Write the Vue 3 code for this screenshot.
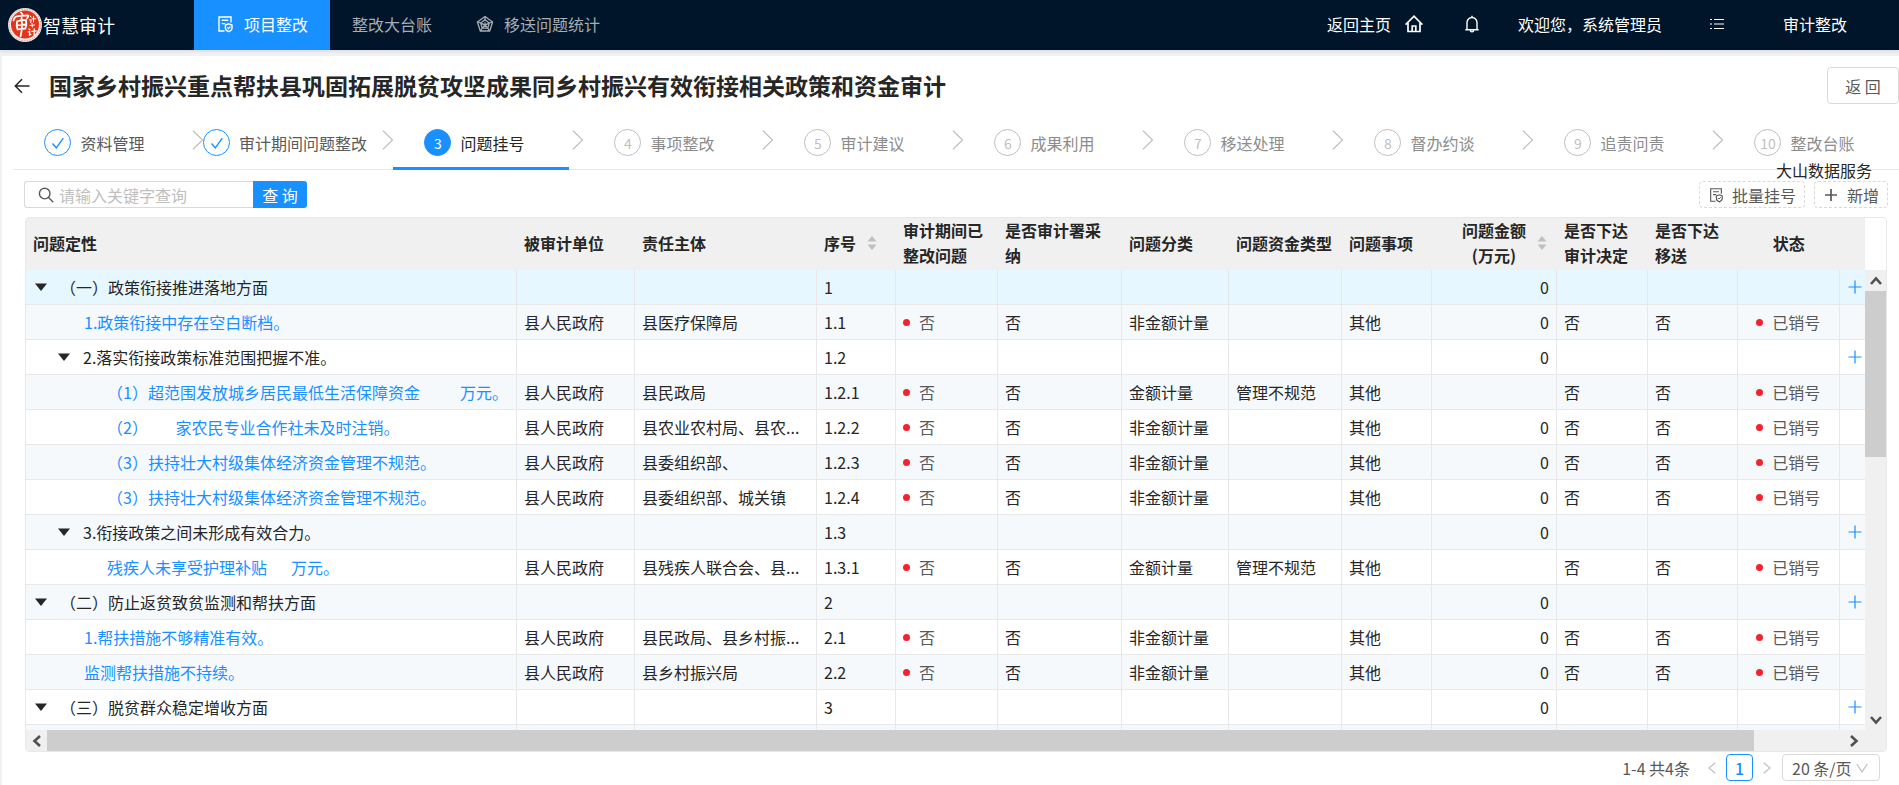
<script setup>
import { ref } from 'vue'

const keyword = ref('')
const pageSize = ref('20')

const steps = [
  { title: '资料管理', state: 'done' },
  { title: '审计期间问题整改', state: 'done' },
  { title: '问题挂号', state: 'active' },
  { title: '事项整改', state: 'wait' },
  { title: '审计建议', state: 'wait' },
  { title: '成果利用', state: 'wait' },
  { title: '移送处理', state: 'wait' },
  { title: '督办约谈', state: 'wait' },
  { title: '追责问责', state: 'wait' },
  { title: '整改台账', state: 'wait' }
]

const columns = [
  { title: '问题定性', width: 491 },
  { title: '被审计单位', width: 118 },
  { title: '责任主体', width: 182 },
  { title: '序号', width: 79, sort: true },
  { title: '审计期间已整改问题', width: 102 },
  { title: '是否审计署采纳', width: 124 },
  { title: '问题分类', width: 107 },
  { title: '问题资金类型', width: 113 },
  { title: '问题事项', width: 90 },
  { title: '问题金额\n(万元)', width: 125, sort: true, align: 'right' },
  { title: '是否下达审计决定', width: 91 },
  { title: '是否下达移送', width: 90 },
  { title: '状态', width: 102, align: 'center' },
  { title: '', width: 25 }
]
const total = columns.reduce((sum, c) => sum + c.width, 0)

const group = (level, name, no) => ({ group: true, level, name, no, amount: '0' })
const leaf = (level, name, duty, no, kind, fund, amount) => ({ level, name, unit: '县人民政府', duty, no, kind, fund, item: '其他', amount })

const rows = [
  group(0, '（一）政策衔接推进落地方面', '1'),
  leaf(1, '1.政策衔接中存在空白断档。', '县医疗保障局', '1.1', '非金额计量', '', '0'),
  group(1, '2.落实衔接政策标准范围把握不准。', '1.2'),
  leaf(2, '（1）超范围发放城乡居民最低生活保障资金\u2003\u2003\u2002万元。', '县民政局', '1.2.1', '金额计量', '管理不规范', ''),
  leaf(2, '（2）\u2003\u2002 家农民专业合作社未及时注销。', '县农业农村局、县农...', '1.2.2', '非金额计量', '', '0'),
  leaf(2, '（3）扶持壮大村级集体经济资金管理不规范。', '县委组织部、', '1.2.3', '非金额计量', '', '0'),
  leaf(2, '（3）扶持壮大村级集体经济资金管理不规范。', '县委组织部、城关镇', '1.2.4', '非金额计量', '', '0'),
  group(1, '3.衔接政策之间未形成有效合力。', '1.3'),
  leaf(2, '残疾人未享受护理补贴\u2003\u2002万元。', '县残疾人联合会、县...', '1.3.1', '金额计量', '管理不规范', ''),
  group(0, '（二）防止返贫致贫监测和帮扶方面', '2'),
  leaf(1, '1.帮扶措施不够精准有效。', '县民政局、县乡村振...', '2.1', '非金额计量', '', '0'),
  leaf(1, '监测帮扶措施不持续。', '县乡村振兴局', '2.2', '非金额计量', '', '0'),
  group(0, '（三）脱贫群众稳定增收方面', '3')
]
</script>

<template>
  <div class="page">
    <header class="topbar">
      <div class="brand">
        <svg class="logo" viewBox="0 0 34 34" aria-hidden="true">
          <circle cx="17" cy="17" r="17" fill="#f3e9e6" />
          <circle cx="17" cy="17" r="15.8" fill="none" stroke="#c9a09a" stroke-width="1" stroke-dasharray="1.5 1.2" />
          <circle cx="17" cy="16.500" r="14" fill="#e2361c" />
          <g fill="none" stroke="#fff" stroke-linecap="round" stroke-linejoin="round">
            <path d="M13 4.500l1.500 2M5.500 12.500c.5-2.500 2-4 4.500-4.300l10-.9c.8 1-.2 2.200-1 3.200" stroke-width="1.700" />
            <path d="M9 13.500c-.6 3-.3 5.500.6 8M9 13.500c3-1.200 6-1.500 9-1.300.6 3 .4 5.800-.6 8.300M9.200 17.300l8.500-.8M9.800 21.300l7.400-.8M13.600 9.800c.6 6 .4 13-1 18.500" stroke-width="1.800" />
            <path d="M22 8l1.300 1M21.500 12l1.800-.4-.6 3M25.500 8.500v5.500M24.300 10.800h3.400M22 17.500l4.500-.5M24 15.500l.3 3.500" stroke-width="1" />
            <path d="M20.800 21l1.200.8M20 24l1.800-.3-.4 3.600 1.500-1M24 23.300l4.300-.5M26.200 20.500v7" stroke-width="1.200" />
          </g>
        </svg>
        <span>智慧审计</span>
      </div>
      <nav class="menu">
        <a href="#" class="menu-item current">
          <svg class="menu-icon" viewBox="0 0 18 18" aria-hidden="true">
            <g fill="none" stroke="currentColor" stroke-width="1.4">
              <path d="M15 7.500V2H3v14h5.500M5.700 5.300h6.600M5.700 8.600h3.500" />
              <path d="M12.700 8.800l3.300 1.200v3c0 1.800-1.500 3-3.300 3.700-1.800-.7-3.300-1.900-3.300-3.700v-3z" />
              <path d="M11.200 12.400l1.200 1.200 2-2.100" stroke-width="1.100" />
            </g>
          </svg>
          项目整改
        </a>
        <a href="#" class="menu-item">整改大台账</a>
        <a href="#" class="menu-item">
          <svg class="menu-icon" viewBox="0 0 18 18" aria-hidden="true">
            <g fill="none" stroke="currentColor" stroke-width="1.300" stroke-linejoin="round">
              <path d="M9 1.500l7.600 5.500-2.900 9H4.300l-2.900-9z" />
              <path d="M9 4.800l4.300 3.200-1.600 5.200H6.300L4.700 8zM9 1.500v3.300M16.600 7l-3.300 1M13.700 16l-2-2.800M4.300 16l2-2.800M1.400 7l3.300 1" />
              <path d="M9 7.200v3l2.500 2.500M9 10.200l-2.500 2.500M9 10.200l4-2M9 10.200l-4-2" />
            </g>
          </svg>
          移送问题统计
        </a>
      </nav>
      <div class="tools">
        <a href="#" class="home-link">
          返回主页
          <svg class="home-icon" viewBox="0 0 18 18" aria-hidden="true">
            <path d="M.5 9.600L9 1.200l8.500 8.400M3 8v8.500h12V8M7.200 16v-5h3.600v5" fill="none" stroke="currentColor" stroke-width="1.700" />
          </svg>
        </a>
        <button type="button" class="plain bell" aria-label="通知">
          <svg viewBox="0 0 16 18" width="16" height="18" aria-hidden="true">
            <path d="M1.300 14.800h13.400M3 14.500V7.500a5 5 0 0 1 10 0v7M8 2.500V.8M6.300 15.200a1.700 1.700 0 0 0 3.400 0" fill="none" stroke="currentColor" stroke-width="1.400" />
          </svg>
        </button>
        <span class="welcome">欢迎您，系统管理员</span>
        <button type="button" class="plain list" aria-label="列表">
          <svg viewBox="0 0 14 12" width="14" height="12" aria-hidden="true">
            <path d="M4 1.500h10M4 6h10M4 10.500h10M0 1.500h2M0 6h2M0 10.500h2" fill="none" stroke="currentColor" stroke-width="1.200" />
          </svg>
        </button>
        <span>审计整改</span>
      </div>
    </header>

    <main class="panel">
      <div class="title-row">
        <button type="button" class="plain back" aria-label="后退">
          <svg viewBox="0 0 16 16" width="16" height="16" aria-hidden="true">
            <path d="M15.500 8H1.500M8 1.200L1.300 8 8 14.800" fill="none" stroke="currentColor" stroke-width="1.500" />
          </svg>
        </button>
        <h1>国家乡村振兴重点帮扶县巩固拓展脱贫攻坚成果同乡村振兴有效衔接相关政策和资金审计</h1>
        <button type="button" class="return-btn">返 回</button>
      </div>

      <ol class="steps">
        <li v-for="(s, i) in steps" :key="s.title" class="step" :class="s.state">
          <span class="step-dot">
            <svg v-if="s.state === 'done'" viewBox="0 0 14 14" width="14" height="14" aria-hidden="true">
              <path d="M1.500 7.500l3.800 4.300 7-9.600" fill="none" stroke="currentColor" stroke-width="1.400" />
            </svg>
            <template v-else>{{ i + 1 }}</template>
          </span>
          <span class="step-title">{{ s.title }}</span>
          <svg v-if="i < steps.length - 1" class="step-arrow" viewBox="0 0 12 20" aria-hidden="true">
            <path d="M1 .8l9.500 9.200L1 19.200" fill="none" stroke="currentColor" stroke-width="1.200" />
          </svg>
        </li>
      </ol>

      <div class="toolbar">
        <form class="search" @submit.prevent>
          <label class="search-box">
            <svg viewBox="0 0 16 16" width="16" height="16" aria-hidden="true">
              <path d="M10.600 10.600l4.600 4.600M12 6.600a5.300 5.300 0 1 1-10.600 0 5.300 5.300 0 0 1 10.600 0z" fill="none" stroke="currentColor" stroke-width="1.400" />
            </svg>
            <input v-model="keyword" type="text" placeholder="请输入关键字查询" aria-label="关键字" />
          </label>
          <button type="submit" class="search-btn">查 询</button>
        </form>
        <div class="actions">
          <button type="button" class="dashed">
            <svg viewBox="0 0 18 18" width="16" height="16" aria-hidden="true">
              <g fill="none" stroke="currentColor" stroke-width="1.300">
                <path d="M15 7.500V2H3v14h5.500M5.700 5.300h6.600M5.700 8.600h3.500" />
                <path d="M12.700 8.800l3.300 1.200v3c0 1.800-1.500 3-3.300 3.700-1.800-.7-3.300-1.900-3.300-3.700v-3z" />
                <path d="M11.200 12.400l1.200 1.200 2-2.100" stroke-width="1.100" />
              </g>
            </svg>
            批量挂号
          </button>
          <button type="button" class="dashed">
            <svg viewBox="0 0 16 16" width="16" height="16" aria-hidden="true">
              <path d="M8 2v12M2 8h12" fill="none" stroke="currentColor" stroke-width="1.700" />
            </svg>
            新增
          </button>
        </div>
        <span class="watermark">大山数据服务</span>
      </div>

      <section class="grid-box">
        <div class="grid-view">
          <table>
            <colgroup>
              <col v-for="(c, i) in columns" :key="i" :style="{ width: (c.width / total) * 100 + '%' }" />
            </colgroup>
            <thead>
              <tr>
                <th v-for="(c, i) in columns" :key="i" scope="col" :class="c.align">
                  <div class="th-inner">
                    <span class="th-text">{{ c.title }}</span>
                    <button v-if="c.sort" type="button" class="plain sorter" aria-label="排序">
                      <svg viewBox="0 0 10 16" width="10" height="16" aria-hidden="true">
                        <path d="M5 1l4.500 5.500h-9zM5 15L.5 9.500h9z" fill="#bfbfbf" />
                      </svg>
                    </button>
                  </div>
                </th>
              </tr>
            </thead>
            <tbody>
              <tr v-for="(r, i) in rows" :key="i" :class="{ hover: i === 0 }">
                <td>
                  <div class="name" :class="['level-' + r.level, { leaf: !r.group }]">
                    <button v-if="r.group" type="button" class="plain caret" aria-label="收起">
                      <svg viewBox="0 0 12 8" width="12" height="8" aria-hidden="true"><path d="M0 .5h12L6 8z" fill="#262626" /></svg>
                    </button>
                    <span v-if="r.group">{{ r.name }}</span>
                    <a v-else href="#">{{ r.name }}</a>
                  </div>
                </td>
                <td>{{ r.unit }}</td>
                <td>{{ r.duty }}</td>
                <td>{{ r.no }}</td>
                <td><span v-if="!r.group" class="badge">否</span></td>
                <td>{{ r.group ? '' : '否' }}</td>
                <td>{{ r.kind }}</td>
                <td>{{ r.fund }}</td>
                <td>{{ r.item }}</td>
                <td class="right">{{ r.amount }}</td>
                <td>{{ r.group ? '' : '否' }}</td>
                <td>{{ r.group ? '' : '否' }}</td>
                <td class="center"><span v-if="!r.group" class="badge">已销号</span></td>
                <td class="add-cell">
                  <button v-if="r.group" type="button" class="plain add" aria-label="新增">
                    <svg viewBox="0 0 14 14" width="14" height="14" aria-hidden="true"><path d="M7 .5v13M.5 7h13" fill="none" stroke="#1890ff" stroke-width="1.200" /></svg>
                  </button>
                </td>
              </tr>
              <tr aria-hidden="true">
                <td v-for="(c, i) in columns" :key="i"></td>
              </tr>
            </tbody>
          </table>
        </div>
        <div class="vbar">
          <svg class="bar-arrow" viewBox="0 0 12 9" width="12" height="9" aria-hidden="true"><path d="M1 8l5-5.500L11 8" fill="none" stroke="#505050" stroke-width="2.600" /></svg>
          <div class="vthumb"></div>
          <svg class="bar-arrow" viewBox="0 0 12 9" width="12" height="9" aria-hidden="true"><path d="M1 1l5 5.500L11 1" fill="none" stroke="#505050" stroke-width="2.600" /></svg>
        </div>
        <div class="hbar">
          <svg class="bar-arrow" viewBox="0 0 9 12" width="9" height="12" aria-hidden="true"><path d="M8 1L2.500 6 8 11" fill="none" stroke="#505050" stroke-width="2.600" /></svg>
          <div class="htrack"><div class="hthumb"></div></div>
          <svg class="bar-arrow" viewBox="0 0 9 12" width="9" height="12" aria-hidden="true"><path d="M1 1l5.500 5L1 11" fill="none" stroke="#505050" stroke-width="2.600" /></svg>
        </div>
        <div class="corner"></div>
      </section>

      <footer class="pager">
        <span>1-4 共4条</span>
        <button type="button" class="plain turn prev" aria-label="上一页">
          <svg viewBox="0 0 8 12" width="8" height="12" aria-hidden="true"><path d="M7.300.8L1 6l6.300 5.200" fill="none" stroke="currentColor" stroke-width="1.200" /></svg>
        </button>
        <button type="button" class="page-no" aria-current="page">1</button>
        <button type="button" class="plain turn next" aria-label="下一页">
          <svg viewBox="0 0 8 12" width="8" height="12" aria-hidden="true"><path d="M.7.8L7 6 .7 11.200" fill="none" stroke="currentColor" stroke-width="1.200" /></svg>
        </button>
        <div class="size">
          <select v-model="pageSize" aria-label="每页条数">
            <option value="20">20 条/页</option>
            <option value="50">50 条/页</option>
          </select>
          <svg viewBox="0 0 12 10" width="12" height="10" aria-hidden="true"><path d="M.8 1L6 8.800 11.200 1" fill="none" stroke="#bfbfbf" stroke-width="1.200" /></svg>
        </div>
      </footer>
    </main>
  </div>
</template>

<style>
body {
  background: #f0f2f5;
}
</style>

<style scoped>
.page {
  display: flex;
  flex-direction: column;
  height: 100vh;
  overflow: hidden;
  font-family: "Noto Sans CJK SC", sans-serif;
  font-size: 16px;
  line-height: 24px;
  color: #262626;
}
.page * {
  box-sizing: border-box;
}
button,
input,
select {
  font: inherit;
  margin: 0;
}
.plain {
  display: inline-flex;
  align-items: center;
  justify-content: center;
  padding: 0;
  border: 0;
  background: none;
  color: inherit;
}
svg {
  display: block;
  flex: none;
}
a {
  text-decoration: none;
}

.topbar {
  display: flex;
  flex: none;
  height: 50px;
  background: #001529;
  color: #fff;
  box-shadow: 0 1px 4px rgba(0, 21, 41, 0.12);
}
.brand {
  display: flex;
  align-items: center;
  width: 194px;
  padding-left: 8px;
  gap: 1px;
  font-size: 18px;
}
.logo {
  width: 34px;
  height: 34px;
}
.menu {
  display: flex;
}
.menu-item {
  display: flex;
  align-items: center;
  gap: 10px;
  padding: 0 22px 2px;
  color: #a6adb4;
}
.menu-item.current {
  background: #1890ff;
  color: #fff;
}
.menu-icon {
  width: 18px;
  height: 18px;
}
.tools {
  display: flex;
  align-items: center;
  margin-left: auto;
  padding: 0 52px 2px 0;
}
.home-link {
  display: flex;
  align-items: center;
  gap: 14px;
  color: #fff;
}
.home-icon {
  width: 18px;
  height: 18px;
}
.bell {
  margin-left: 41px;
}
.welcome {
  margin-left: 38px;
}
.list {
  margin: 0 59px 0 48px;
}

.panel {
  display: flex;
  flex: 1;
  flex-direction: column;
  min-height: 0;
  margin: 6px 0 0 2px;
  padding-bottom: 4px;
  background: #fff;
}
.title-row {
  display: flex;
  align-items: center;
  padding: 11px 0 0 12px;
}
.back {
  width: 16px;
  height: 16px;
}
h1 {
  margin: 0 0 0 19px;
  padding-bottom: 2px;
  font-size: 23px;
  line-height: 32px;
  font-weight: 700;
  white-space: nowrap;
}
.return-btn {
  width: 72px;
  height: 37px;
  margin-left: auto;
  padding: 0;
  border: 1px solid #d9d9d9;
  border-radius: 4px;
  background: #fff;
  color: #595959;
}

.steps {
  display: flex;
  margin: 0 0 0 11px;
  padding: 0 13px 0 0;
  border-bottom: 1px solid #e8e8e8;
  list-style: none;
}
.step {
  position: relative;
  display: flex;
  flex: 1 1 0;
  justify-content: safe center;
  align-items: center;
  gap: 9px;
  min-width: 0;
  height: 65px;
  padding: 12px 27px 0 0;
  white-space: nowrap;
  color: #8c8c8c;
}
.step:last-child {
  padding-right: 0;
}
.step.done {
  color: #595959;
}
.step.active {
  color: #262626;
}
.step.active::after {
  content: "";
  position: absolute;
  right: 14px;
  bottom: -1px;
  left: 0;
  height: 3px;
  background: #1890ff;
}
.step-dot {
  display: flex;
  flex: none;
  align-items: center;
  justify-content: center;
  width: 27px;
  height: 27px;
  border: 1px solid #bfbfbf;
  border-radius: 50%;
  font-size: 14px;
  color: #bfbfbf;
}
.done .step-dot {
  border-color: #1890ff;
  color: #1890ff;
}
.active .step-dot {
  border-color: #1890ff;
  background: #1890ff;
  color: #fff;
}
.step-arrow {
  position: absolute;
  top: 26px;
  right: -1px;
  width: 12px;
  height: 20px;
  color: #bfbfbf;
}

.toolbar {
  position: relative;
  display: flex;
  justify-content: space-between;
  padding: 11px 11px 9px 22px;
}
.search {
  display: flex;
  height: 27px;
}
.search-box {
  display: flex;
  align-items: center;
  gap: 5px;
  width: 229px;
  padding-left: 13px;
  border: 1px solid #d9d9d9;
  border-right: 0;
  border-radius: 3px 0 0 3px;
  color: #595959;
}
.search-box input {
  flex: 1;
  min-width: 0;
  height: 24px;
  padding: 0;
  border: 0;
  outline: 0;
  background: none;
}
.search-box input::placeholder {
  color: #bfbfbf;
}
.search-btn {
  width: 54px;
  padding: 0;
  border: 0;
  border-radius: 0 3px 3px 0;
  background: #1890ff;
  color: #fff;
}
.actions {
  display: flex;
  gap: 9px;
}
.dashed {
  display: flex;
  align-items: center;
  gap: 8px;
  height: 27px;
  padding: 0 8px;
  border: 1px dashed #d9d9d9;
  border-radius: 4px;
  background: #fff;
  color: #595959;
}
.watermark {
  position: absolute;
  top: -12px;
  right: 27px;
}

.grid-box {
  display: grid;
  flex: 1;
  grid-template-columns: minmax(0, 1fr) 21px;
  grid-template-rows: minmax(0, 1fr) 21px;
  min-height: 0;
  margin: 0 12px 0 23px;
  border: 1px solid #e8e8e8;
  border-radius: 4px;
  overflow: hidden;
}
.grid-view {
  overflow: hidden;
}
table {
  width: 100%;
  border-collapse: separate;
  border-spacing: 0;
  table-layout: fixed;
}
th {
  height: 52px;
  padding: 0 7px 2px;
  background: #f0f0f0;
  font-weight: 700;
  line-height: 25px;
  text-align: left;
}
th:last-child {
  padding: 0;
}
.th-inner {
  display: flex;
  align-items: center;
  gap: 11px;
}
.th-text {
  white-space: pre-line;
}
th.right .th-inner {
  justify-content: flex-end;
  text-align: center;
}
th.center .th-inner {
  justify-content: center;
}
.sorter {
  margin-right: 3px;
}
td {
  height: 35px;
  padding: 0 7px;
  border-right: 1px solid #e8e8e8;
  border-bottom: 1px solid #e8e8e8;
  overflow: hidden;
  text-overflow: ellipsis;
  white-space: nowrap;
}
td:last-child {
  border-right: 0;
}
tbody tr:nth-child(even) td {
  background: #f5f9fc;
}
tbody tr.hover td {
  background: #e6f7ff;
}
.right {
  text-align: right;
}
.center {
  text-align: center;
}
.add-cell {
  padding: 0 0 0 8px;
  text-overflow: clip;
}
.add {
  display: flex;
  width: 14px;
  height: 14px;
}
.name {
  display: flex;
  align-items: center;
  gap: 13px;
  padding-left: 2px;
  white-space: pre;
}
.name a {
  color: #1890ff;
}
.level-1 {
  padding-left: 25px;
}
.level-1.leaf {
  padding-left: 51px;
}
.level-2.leaf {
  padding-left: 74px;
}
.caret {
  width: 12px;
  height: 8px;
}
.badge {
  display: inline-flex;
  align-items: center;
  gap: 9px;
  vertical-align: top;
  color: #595959;
}
.badge::before {
  content: "";
  width: 7px;
  height: 7px;
  border-radius: 50%;
  background: #f5222d;
}
.vbar {
  display: flex;
  flex-direction: column;
  align-items: center;
  justify-content: space-between;
  margin-top: 52px;
  padding: 6px 0 5px;
  background: #f0f0f0;
}
.vthumb {
  width: 21px;
  height: 37%;
  margin: 6px 0 auto;
  background: #cdcdcd;
}
.hbar {
  display: flex;
  align-items: center;
  gap: 6px;
  padding: 0 6px;
  background: #f0f0f0;
}
.htrack {
  flex: 1;
  height: 21px;
}
.hthumb {
  width: 95%;
  height: 21px;
  background: #cdcdcd;
}
.corner {
  background: #f0f0f0;
}

.pager {
  display: flex;
  align-items: center;
  justify-content: flex-end;
  height: 27px;
  margin-top: 2px;
  padding-right: 19px;
  color: #595959;
}
.turn {
  color: #bfbfbf;
}
.prev {
  margin: 0 10px 0 18px;
}
.next {
  margin: 0 11px 0 10px;
}
.page-no {
  width: 27px;
  height: 27px;
  padding: 0;
  border: 1px solid #1890ff;
  border-radius: 4px;
  background: #fff;
  color: #1890ff;
  font-weight: 500;
}
.size {
  display: flex;
  align-items: center;
  width: 98px;
  height: 27px;
  padding: 0 11px 0 9px;
  border: 1px solid #d9d9d9;
  border-radius: 4px;
}
.size select {
  flex: 1;
  min-width: 0;
  padding: 0;
  border: 0;
  outline: 0;
  appearance: none;
  background: none;
  color: inherit;
}
</style>
